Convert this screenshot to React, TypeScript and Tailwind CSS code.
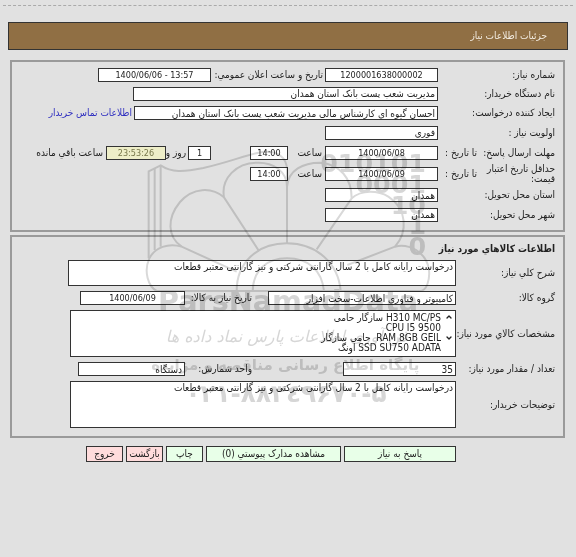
import { clsx } from "clsx";
import { ChevronDown, ChevronUp } from "lucide-react";
import type { ReactNode } from "react";

const DESCRIPTION = "درخواست رایانه کامل با 2 سال گارانتی شرکتی و نیز گارانتی معتبر قطعات";

const SPECS = ["H310 MC/PS سازگار حامی", "CPU I5 9500", "RAM 8GB GEIL  حامی سازگار", "SSD SU750 ADATA اونگ"].join("\n");

const BUTTONS = [
  { label: "پاسخ به نیاز", className: "w-[112px] bg-[#e8ffe8]" },
  { label: "مشاهده مدارک پیوستي (0)", className: "w-[135px] bg-[#e8ffe8]" },
  { label: "چاپ", className: "w-[37px] bg-[#e8ffe8]" },
  { label: "بازگشت", className: "w-[37px] bg-[#ffdcdc]" },
  { label: "خروج", className: "w-[37px] bg-[#ffdcdc]" },
];

function Box({
  id,
  value,
  numeric,
  className = "bg-white",
}: {
  id: string;
  value: string;
  numeric?: boolean;
  className?: string;
}) {
  return (
    <input
      className={clsx(
        "h-[14px] shrink-0 border border-[#333333] px-[2px] outline-none",
        numeric && "text-center text-[9px]",
        className,
      )}
      defaultValue={value}
      dir={numeric ? "ltr" : undefined}
      id={id}
      type="text"
    />
  );
}

function Area({ id, value, className }: { id: string; value: string; className?: string }) {
  return (
    <textarea
      className={clsx("shrink-0 resize-none overflow-hidden border border-[#333333] bg-white px-[2px] outline-none", className)}
      defaultValue={value}
      id={id}
    />
  );
}

function NeedRow({
  id,
  label,
  until,
  className,
  children,
}: {
  id: string;
  label: string;
  until?: boolean;
  className?: string;
  children: ReactNode;
}) {
  return (
    <div className={clsx("flex items-center", className)}>
      <div className="flex w-[117px] shrink-0 items-center">
        <label
          className={clsx("leading-[10px]", until ? "w-[78px] shrink-0 whitespace-pre-line" : "whitespace-nowrap")}
          htmlFor={id}
        >
          {label}
        </label>
        {until && <span className="whitespace-nowrap">تا تاریخ :</span>}
      </div>
      {children}
    </div>
  );
}

function GoodsRow({ id, label, children }: { id: string; label: string; children: ReactNode }) {
  return (
    <div className="flex items-center">
      <label className="w-[99px] shrink-0 whitespace-nowrap" htmlFor={id}>
        {label}
      </label>
      {children}
    </div>
  );
}

function Watermark() {
  return (
    <svg
      aria-hidden="true"
      className="pointer-events-none absolute inset-x-0 top-[150px] mx-auto h-[260px] w-[296px] mix-blend-multiply"
      viewBox="0 0 888 780"
    >
      <g fill="none" stroke="#d9d9d9" strokeWidth="6">
        <path d="M26 325V64L62 46C95 68 130 66 190 54C260 38 310 18 355 8C415 -4 441 25 441 60V280" />
        <path d="M44 300V56M62 290V46" />
        <path d="M357 303L252 142C242 85 290 38 350 38C400 36 441 65 441 110" />
        <path d="M441 110C445 60 490 38 540 38C600 42 635 85 635 145L530 298" />
        <path d="M252 142C215 110 158 112 120 156C80 205 82 260 125 290" />
        <path d="M635 145C665 118 715 122 745 140C800 175 805 245 765 290" />
        <path d="M290 365L125 290C85 278 45 292 28 325C10 365 25 410 50 423H840C860 423 870 390 867 360C860 305 805 280 765 290L622 345" />
        <path d="M290 423C290 340 350 280 440 280C530 280 595 340 602 423" />
        <path d="M338 423C340 360 380 325 441 325C505 325 545 360 552 423" />
      </g>
      <g className="font-['DejaVu_Sans'] font-bold" direction="ltr" fill="#d6d6d6">
        <g fontSize="76" textAnchor="end">
          <text x="858" y="66">010101</text>
          <text x="858" y="128">0001</text>
          <text x="858" y="191">10</text>
          <text x="858" y="252">1</text>
          <text x="858" y="315">0</text>
        </g>
        <text fontSize="86" textAnchor="middle" x="444" y="482">
          ParsNamadData
        </text>
      </g>
      <g className="font-['DejaVu_Sans']" direction="rtl" fill="#d6d6d6" textAnchor="middle">
        <text className="italic" fontSize="48" x="440" y="575">
          فن آوری اطلاعات پارس نماد داده ها
        </text>
        <text className="font-bold" fontSize="45" x="436" y="660">
          پایگاه اطلاع رسانی مناقصه و مزایده
        </text>
        <text className="font-bold" direction="ltr" fontSize="74" x="438" y="756">
          ۰۲۱-۸۸۳٤۹۶۷۰-۵
        </text>
      </g>
    </svg>
  );
}

export default function App() {
  return (
    <main
      className="relative min-h-screen bg-[#e1e1e1] font-['DejaVu_Sans_Condensed','DejaVu_Sans',sans-serif] text-[10px] text-[#222222] leading-[12px]"
      dir="rtl"
    >
      <div className="px-[3px] pt-[5px]">
        <div className="border-[#aaaaaa] border-t border-dashed" />
      </div>
      <h1 className="mx-2 mt-4 flex h-7 items-center border border-[#333333] bg-[#906f44] px-5 text-[#f2ebe0]">
        جزئیات اطلاعات نیاز
      </h1>

      <form className="mt-[10px] pr-[11px] pl-[10px]">
        <fieldset className="border-2 border-[#9a9a9a] px-2 pt-[3px] pb-[6px]">
          <NeedRow className="h-[19px]" id="number" label="شماره نیاز:">
            <Box className="w-[113px] bg-white" id="number" numeric value="1200001638000002" />
            <label className="w-[114px] whitespace-nowrap pr-[2px]" htmlFor="announced">
              تاریخ و ساعت اعلان عمومي:
            </label>
            <Box className="w-[113px] bg-white" id="announced" numeric value="1400/06/06 - 13:57" />
          </NeedRow>
          <NeedRow className="h-[19px]" id="buyer" label="نام دستگاه خریدار:">
            <Box className="w-[305px] bg-white" id="buyer" value="مدیریت شعب پست بانک استان همدان" />
          </NeedRow>
          <NeedRow className="h-5" id="creator" label="ایجاد کننده درخواست:">
            <Box
              className="w-[304px] bg-white"
              id="creator"
              value="احسان گیوه ای کارشناس مالی مدیریت شعب پست بانک استان همدان"
            />
            <a className="whitespace-nowrap pr-[2px] text-[#3030c0]" href="#contact">
              اطلاعات تماس خریدار
            </a>
          </NeedRow>
          <NeedRow className="h-[19px]" id="priority" label="اولویت نیاز :">
            <Box className="w-[113px] bg-white" id="priority" value="فوري" />
          </NeedRow>
          <NeedRow className="h-[21px]" id="reply-date" label="مهلت ارسال پاسخ:" until>
            <Box className="w-[113px] bg-white" id="reply-date" numeric value="1400/06/08" />
            <label className="w-[37px] pr-[3px]" htmlFor="reply-time">
              ساعت
            </label>
            <Box className="w-[38px] bg-white" id="reply-time" numeric value="14:00" />
            <Box className="mr-[39px] w-[23px] bg-white" id="days" numeric value="1" />
            <label className="w-[22px] whitespace-nowrap pr-[2px]" htmlFor="days">
              روز و
            </label>
            <Box className="w-[60px] bg-[#eeeec8] text-[#77774a]" id="remaining" numeric value="23:53:26" />
            <label className="whitespace-nowrap pr-[3px]" htmlFor="remaining">
              ساعت باقي مانده
            </label>
          </NeedRow>
          <NeedRow className="h-[22px]" id="price-date" label={"حداقل تاریخ اعتبار\nقیمت:"} until>
            <Box className="w-[113px] bg-white" id="price-date" numeric value="1400/06/09" />
            <label className="w-[37px] pr-[3px]" htmlFor="price-time">
              ساعت
            </label>
            <Box className="w-[38px] bg-white" id="price-time" numeric value="14:00" />
          </NeedRow>
          <NeedRow className="h-5" id="province" label="استان محل تحویل:">
            <Box className="w-[113px] bg-white" id="province" value="همدان" />
          </NeedRow>
          <NeedRow className="h-[19px]" id="city" label="شهر محل تحویل:">
            <Box className="w-[113px] bg-white" id="city" value="همدان" />
          </NeedRow>
        </fieldset>

        <fieldset className="mt-[3px] flex flex-col gap-[5px] border-2 border-[#9a9a9a] px-2 pt-[6px] pb-2">
          <h2 className="font-bold">اطلاعات کالاهاي مورد نیاز</h2>
          <GoodsRow id="summary" label="شرح کلي نیاز:">
            <Area className="h-[26px] w-[388px]" id="summary" value={DESCRIPTION} />
          </GoodsRow>
          <GoodsRow id="group" label="گروه کالا:">
            <Box className="w-[188px] bg-white" id="group" value="کامپیوتر و فناوری اطلاعات-سخت افزار" />
            <label className="w-[83px] whitespace-nowrap pr-4" htmlFor="need-date">
              تاریخ نیاز به کالا:
            </label>
            <Box className="w-[105px] bg-white" id="need-date" numeric value="1400/06/09" />
          </GoodsRow>
          <GoodsRow id="specs" label="مشخصات کالاي مورد نیاز:">
            <div className="flex h-[47px] w-[386px] border border-[#333333] bg-white">
              <div className="flex w-3 flex-col items-center justify-between pt-[2px] pb-[14px]">
                <ChevronUp className="h-2 w-2" strokeWidth={4} />
                <ChevronDown className="h-2 w-2" strokeWidth={4} />
              </div>
              <textarea
                className="flex-1 resize-none overflow-hidden pt-[2px] pr-[2px] leading-[10px] outline-none"
                defaultValue={SPECS}
                id="specs"
              />
            </div>
          </GoodsRow>
          <GoodsRow id="amount" label="تعداد / مقدار مورد نیاز:">
            <Box className="w-[113px] bg-white" id="amount" value="35" />
            <label className="w-[158px] whitespace-nowrap pr-[91px]" htmlFor="unit">
              واحد شمارش:
            </label>
            <Box className="w-[107px] bg-white" id="unit" value="دستگاه" />
          </GoodsRow>
          <GoodsRow id="notes" label="توضیحات خریدار:">
            <Area className="h-[47px] w-[386px]" id="notes" value={DESCRIPTION} />
          </GoodsRow>
        </fieldset>

        <div className="mt-2 flex gap-[3px] pr-[109px]">
          {BUTTONS.map((button) => (
            <button
              className={clsx("h-4 whitespace-nowrap border border-[#333333] leading-[12px]", button.className)}
              key={button.label}
              type="button"
            >
              {button.label}
            </button>
          ))}
        </div>
      </form>

      <Watermark />
    </main>
  );
}
